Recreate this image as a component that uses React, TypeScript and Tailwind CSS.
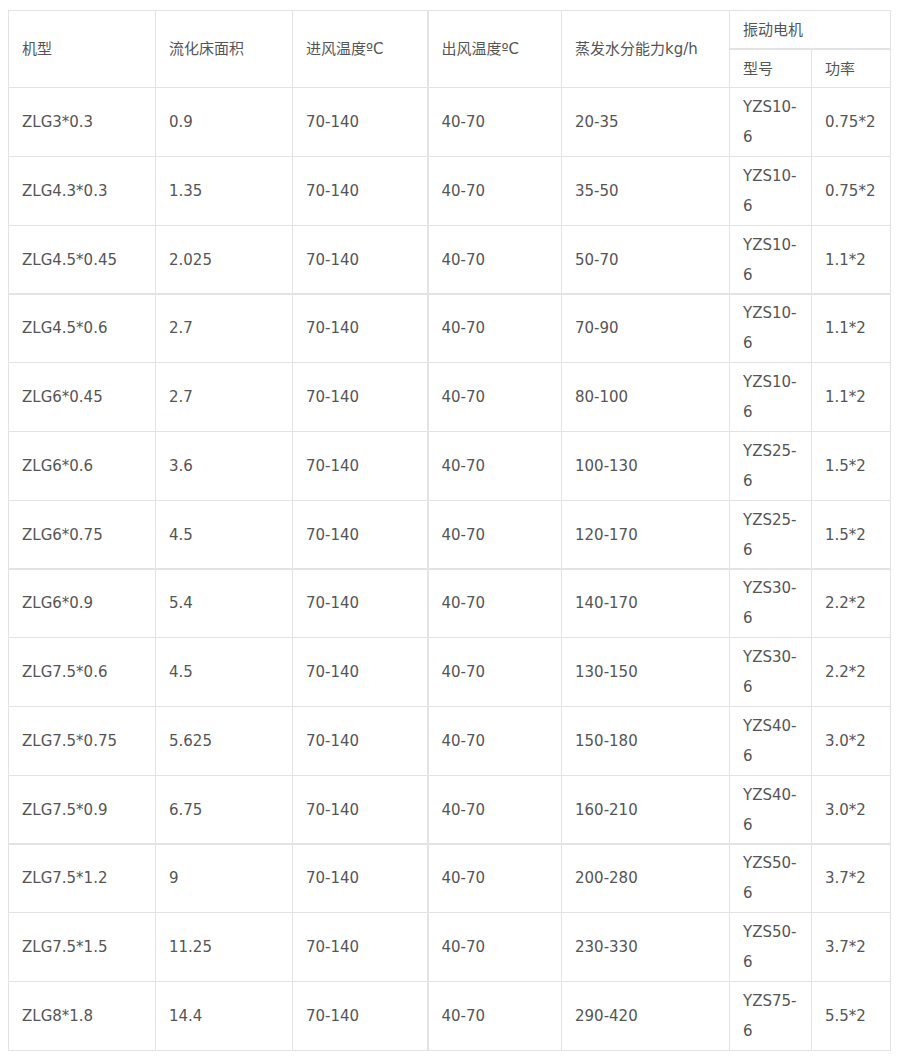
const rows: [string, string, string, string, string, string, string][] = [
  ['ZLG3*0.3', '0.9', '70-140', '40-70', '20-35', 'YZS10-6', '0.75*2'],
  ['ZLG4.3*0.3', '1.35', '70-140', '40-70', '35-50', 'YZS10-6', '0.75*2'],
  ['ZLG4.5*0.45', '2.025', '70-140', '40-70', '50-70', 'YZS10-6', '1.1*2'],
  ['ZLG4.5*0.6', '2.7', '70-140', '40-70', '70-90', 'YZS10-6', '1.1*2'],
  ['ZLG6*0.45', '2.7', '70-140', '40-70', '80-100', 'YZS10-6', '1.1*2'],
  ['ZLG6*0.6', '3.6', '70-140', '40-70', '100-130', 'YZS25-6', '1.5*2'],
  ['ZLG6*0.75', '4.5', '70-140', '40-70', '120-170', 'YZS25-6', '1.5*2'],
  ['ZLG6*0.9', '5.4', '70-140', '40-70', '140-170', 'YZS30-6', '2.2*2'],
  ['ZLG7.5*0.6', '4.5', '70-140', '40-70', '130-150', 'YZS30-6', '2.2*2'],
  ['ZLG7.5*0.75', '5.625', '70-140', '40-70', '150-180', 'YZS40-6', '3.0*2'],
  ['ZLG7.5*0.9', '6.75', '70-140', '40-70', '160-210', 'YZS40-6', '3.0*2'],
  ['ZLG7.5*1.2', '9', '70-140', '40-70', '200-280', 'YZS50-6', '3.7*2'],
  ['ZLG7.5*1.5', '11.25', '70-140', '40-70', '230-330', 'YZS50-6', '3.7*2'],
  ['ZLG8*1.8', '14.4', '70-140', '40-70', '290-420', 'YZS75-6', '5.5*2'],
];

// rows after which the grid line is drawn heavier
const heavy = [2, 6, 10];
const afterHeavy = [3, 7, 11];

const cell = 'border border-[#e3e3e3] px-[13px] text-left align-middle font-normal';

export default function App() {
  return (
    <div
      className="min-h-screen bg-white pt-[10px] pl-[8px] text-[15px] leading-[30px] text-[#555]"
      style={{ fontFamily: '"DejaVu Sans", "Noto Sans CJK SC", sans-serif' }}
    >
      <table className="table-fixed border-collapse w-[882px]">
        <colgroup>
          <col className="w-[147px]" />
          <col className="w-[137px]" />
          <col className="w-[135px]" />
          <col className="w-[134px]" />
          <col className="w-[168px]" />
          <col className="w-[82px]" />
          <col className="w-[79px]" />
        </colgroup>
        <thead>
          <tr>
            <th rowSpan={2} className={`${cell} py-[4px]`}>机型</th>
            <th rowSpan={2} className={`${cell} py-[4px]`}>流化床面积</th>
            <th rowSpan={2} className={`${cell} py-[4px] border-r-2`}>进风温度ºC</th>
            <th rowSpan={2} className={`${cell} py-[4px]`}>出风温度ºC</th>
            <th rowSpan={2} className={`${cell} py-[4px]`}>蒸发水分能力kg/h</th>
            <th colSpan={2} className={`${cell} pt-[4px] pb-[3px] border-b-2`}>振动电机</th>
          </tr>
          <tr>
            <th className={`${cell} pt-[4px] pb-[3px]`}>型号</th>
            <th className={`${cell} pt-[4px] pb-[3px]`}>功率</th>
          </tr>
        </thead>
        <tbody>
          {rows.map((r, i) => {
            const isHeavy = heavy.includes(i);
            const pad = isHeavy ? 'pt-[4px] pb-[3px] border-b-2' : afterHeavy.includes(i) ? 'pt-[3px] pb-[4px]' : 'py-[4px]';
            return (
              <tr key={r[0]}>
                {r.map((v, j) => (
                  <td key={j} className={`${cell} ${pad} ${j === 2 ? 'border-r-2' : ''}`}>
                    {v}
                  </td>
                ))}
              </tr>
            );
          })}
        </tbody>
      </table>
    </div>
  );
}
